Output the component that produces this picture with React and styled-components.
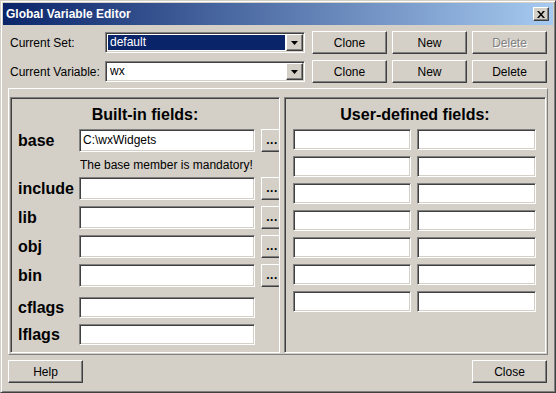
import React from "react";
import styled, { createGlobalStyle, css } from "styled-components";

const GlobalStyle = createGlobalStyle`
  html, body { margin: 0; padding: 0; background: #d4d0c8; }
  body { font-family: "Liberation Sans", Arial, sans-serif; font-size: 12px; color: #000; }
  * { box-sizing: border-box; }
`;

const raised = css`
  border: 1px solid;
  border-color: #fff #404040 #404040 #fff;
  box-shadow: inset -1px -1px #808080, inset 1px 1px #d4d0c8;
  background: #d4d0c8;
`;

const sunken = css`
  border: 1px solid;
  border-color: #808080 #fff #fff #808080;
  box-shadow: inset 1px 1px #404040, inset -1px -1px #d4d0c8;
`;

const Window = styled.div`
  width: 556px;
  height: 393px;
  background: #d4d0c8;
  border: 1px solid;
  border-color: #d4d0c8 #404040 #404040 #d4d0c8;
  box-shadow: inset 1px 1px #fff, inset -1px -1px #808080;
  padding: 2px;
  display: flex;
  flex-direction: column;
`;

const TitleBar = styled.div`
  height: 22px;
  flex: none;
  display: flex;
  align-items: center;
  padding: 0 4px 0 3px;
  background: linear-gradient(to right, #0a246a, #a6caf0);
  color: #fff;
  font-weight: bold;
  font-size: 12px;
`;

const CloseBox = styled.div`
  ${raised};
  margin-left: auto;
  width: 16px;
  height: 14px;
  display: flex;
  align-items: center;
  justify-content: center;
`;

const Body = styled.div`
  flex: 1;
  display: flex;
  flex-direction: column;
  padding: 6px 5px 7px 5px;
`;

const TopRow = styled.div`
  display: flex;
  align-items: center;
  height: 23px;
  padding-left: 2px;
  & + & { margin-top: 6px; }
`;

const TopLabel = styled.div`
  width: 95px;
`;

const Combo = styled.div`
  ${sunken};
  width: 200px;
  height: 21px;
  background: #fff;
  display: flex;
  padding: 1px;
`;

const ComboText = styled.div`
  flex: 1;
  margin: 1px 1px 1px 1px;
  padding-left: 2px;
  line-height: 15px;
  background: ${(p) => (p.$selected ? "#0a246a" : "transparent")};
  color: ${(p) => (p.$selected ? "#fff" : "#000")};
`;

const DropButton = styled.div`
  ${raised};
  width: 17px;
  height: 17px;
  display: flex;
  align-items: center;
  justify-content: center;
`;

const Button = styled.div`
  ${raised};
  width: 75px;
  height: 23px;
  margin-left: ${(p) => p.$gap || 0}px;
  display: flex;
  align-items: center;
  justify-content: center;
  color: ${(p) => (p.$disabled ? "#808080" : "#000")};
  text-shadow: ${(p) => (p.$disabled ? "1px 1px #fff" : "none")};
`;

const Group = styled.div`
  margin-top: 5px;
  height: 267px;
  border: 1px solid;
  border-color: #fff #808080 #808080 #fff;
  padding: 8px 1px 1px 1px;
  display: flex;
  gap: 4px;
`;

const Panel = styled.div`
  ${sunken};
  width: ${(p) => p.$width}px;
  height: 256px;
  padding: 1px;
  overflow: hidden;
`;

const PanelTitle = styled.div`
  height: 30px;
  line-height: 32px;
  text-align: center;
  font-weight: bold;
  font-size: 16px;
`;

const FieldRow = styled.div`
  display: flex;
  height: ${(p) => p.$h}px;
  margin-top: ${(p) => p.$mt || 0}px;
  padding-left: 6px;
`;

const RowLabel = styled.div`
  width: 61px;
  flex: none;
  display: flex;
  align-items: center;
  font-weight: bold;
  font-size: 16px;
`;

const Field = styled.div`
  ${sunken};
  background: #fff;
  width: ${(p) => p.$w}px;
  height: ${(p) => p.$h || 21}px;
  flex: none;
  padding: 2px 3px;
  line-height: 17px;
`;

const Browse = styled.div`
  ${raised};
  width: 22px;
  flex: none;
  margin-left: 6px;
  display: flex;
  align-items: center;
  justify-content: center;
  font-weight: bold;
  letter-spacing: 0.5px;
  padding-bottom: 2px;
`;

const Note = styled.div`
  height: 25px;
  line-height: 25px;
  padding-left: 68px;
  padding-top: 1px;
`;

const UserGrid = styled.div`
  display: grid;
  grid-template-columns: 118px 119px;
  grid-auto-rows: 21px;
  column-gap: 6px;
  row-gap: 6px;
  padding-left: 7px;
`;

const Footer = styled.div`
  display: flex;
  justify-content: space-between;
  margin-top: 5px;
  padding-right: 1px;
`;

const Arrow = () => (
  <svg width="7" height="4" viewBox="0 0 7 4">
    <path d="M0 0h7L3.5 4z" fill="#000" />
  </svg>
);

const XGlyph = () => (
  <svg width="8" height="7" viewBox="0 0 8 7">
    <path d="M0 0h2l2 2.5L6 0h2L5 3.5 8 7H6L4 4.5 2 7H0l3-3.5z" fill="#000" />
  </svg>
);

const builtIn = [
  { name: "base", value: "C:\\wxWidgets", browse: true, mt: 0 },
  { name: "include", browse: true, mt: 0 },
  { name: "lib", browse: true, mt: 6 },
  { name: "obj", browse: true, mt: 6 },
  { name: "bin", browse: true, mt: 6 },
  { name: "cflags", mt: 10 },
  { name: "lflags", mt: 6 },
];

export default function App() {
  return (
    <>
      <GlobalStyle />
      <Window>
        <TitleBar>
          Global Variable Editor
          <CloseBox>
            <XGlyph />
          </CloseBox>
        </TitleBar>
        <Body>
          <TopRow>
            <TopLabel>Current Set:</TopLabel>
            <Combo>
              <ComboText $selected>default</ComboText>
              <DropButton>
                <Arrow />
              </DropButton>
            </Combo>
            <Button $gap={7}>Clone</Button>
            <Button $gap={5}>New</Button>
            <Button $gap={5} $disabled>
              Delete
            </Button>
          </TopRow>
          <TopRow>
            <TopLabel>Current Variable:</TopLabel>
            <Combo>
              <ComboText>wx</ComboText>
              <DropButton>
                <Arrow />
              </DropButton>
            </Combo>
            <Button $gap={7}>Clone</Button>
            <Button $gap={5}>New</Button>
            <Button $gap={5}>Delete</Button>
          </TopRow>

          <Group>
            <Panel $width={270}>
              <PanelTitle>Built-in fields:</PanelTitle>
              {builtIn.map((f) => (
                <React.Fragment key={f.name}>
                  <FieldRow $h={f.browse ? 23 : 21} $mt={f.mt}>
                    <RowLabel>{f.name}</RowLabel>
                    <Field $w={176} $h={f.browse ? 23 : 21}>
                      {f.value}
                    </Field>
                    {f.browse && <Browse>...</Browse>}
                  </FieldRow>
                  {f.name === "base" && <Note>The base member is mandatory!</Note>}
                </React.Fragment>
              ))}
            </Panel>
            <Panel $width={262}>
              <PanelTitle>User-defined fields:</PanelTitle>
              <UserGrid>
                {Array.from({ length: 14 }, (_, i) => (
                  <Field key={i} $w={i % 2 ? 119 : 118} />
                ))}
              </UserGrid>
            </Panel>
          </Group>

          <Footer>
            <Button>Help</Button>
            <Button>Close</Button>
          </Footer>
        </Body>
      </Window>
    </>
  );
}
